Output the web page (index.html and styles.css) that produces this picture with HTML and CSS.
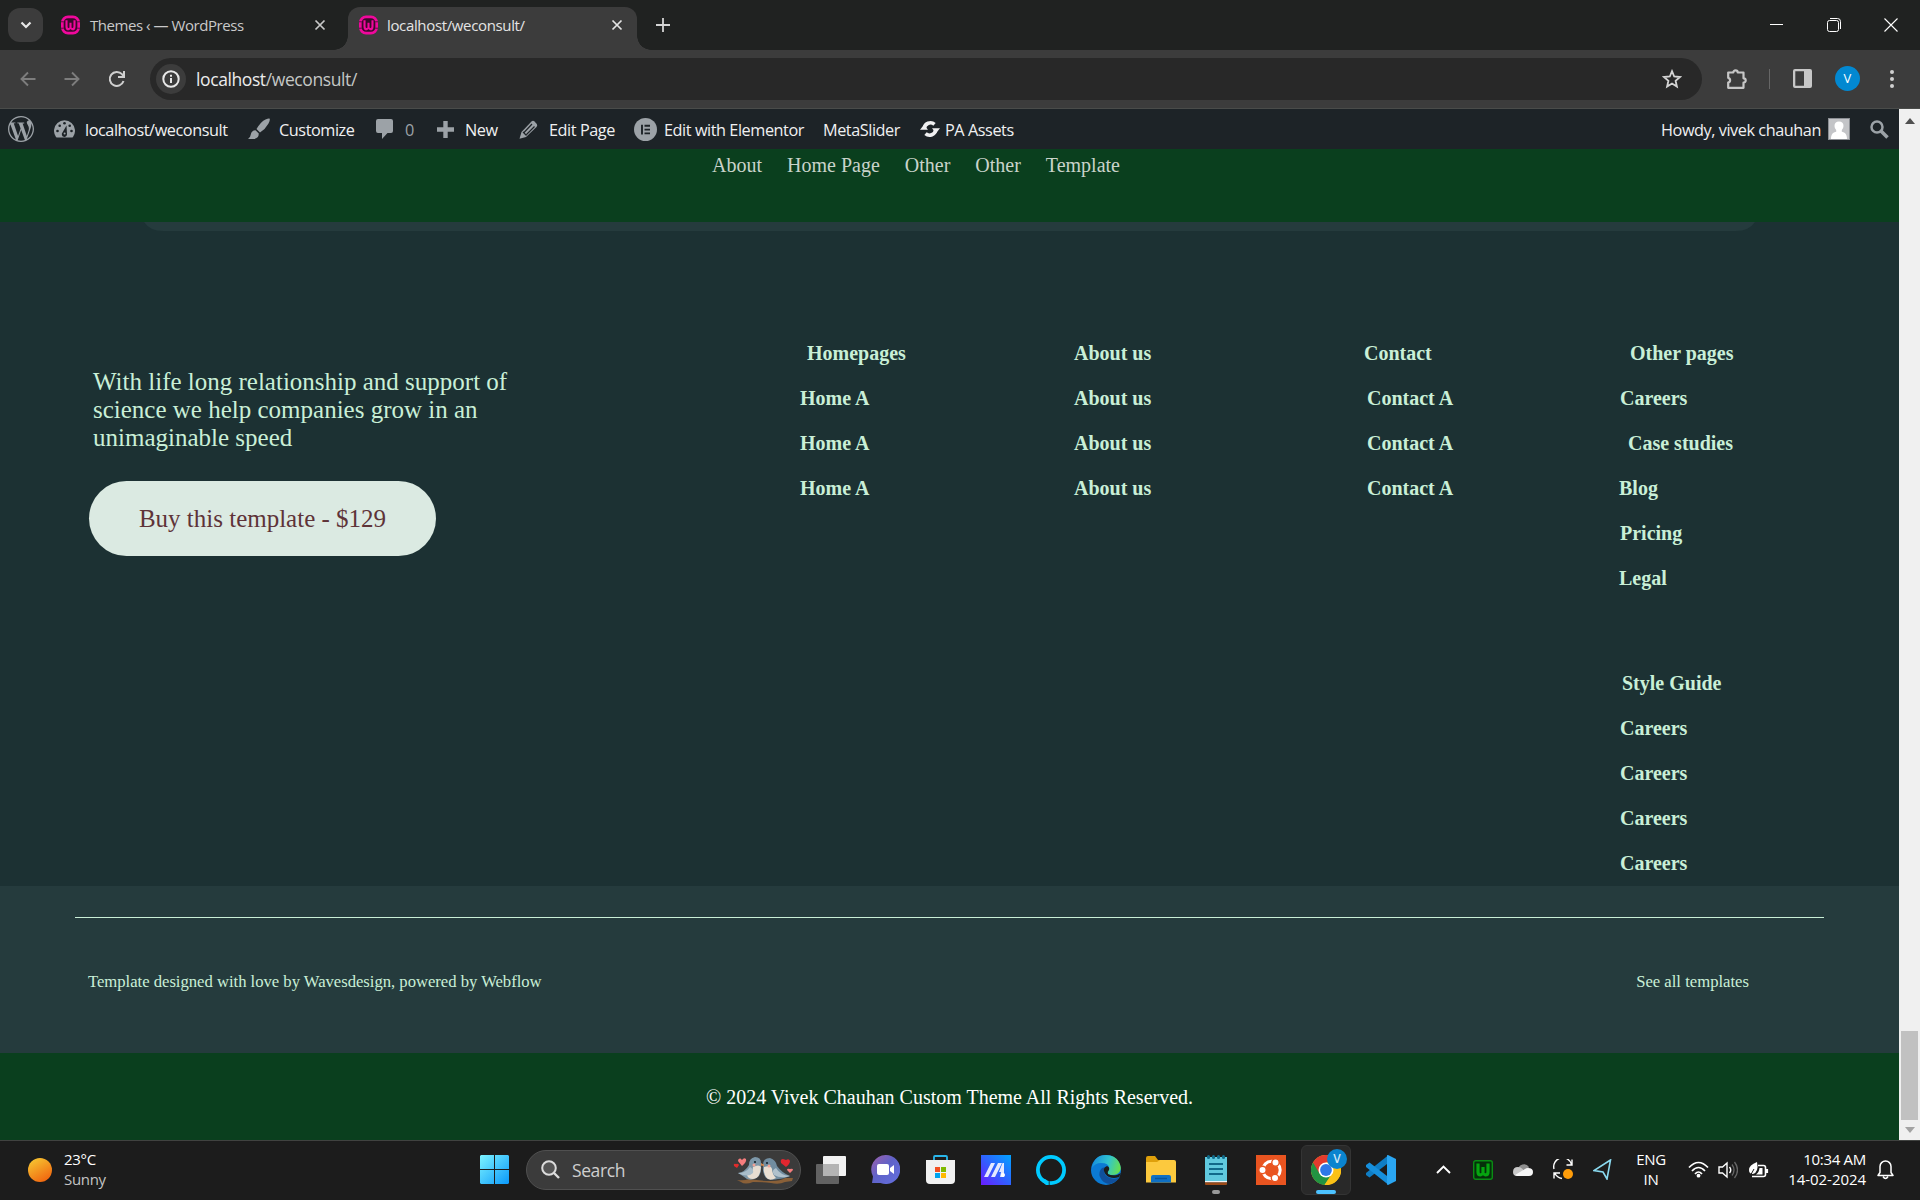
FILE: index.html
```html
<!DOCTYPE html>
<html lang="en">
<head>
<meta charset="utf-8">
<title>localhost/weconsult/</title>
<link rel="stylesheet" href="styles.css">
</head>
<body>
<svg width="0" height="0" class="defs">
  <symbol id="favicon" viewBox="0 0 20 20">
    <rect x="1.4" y="1.4" width="17.2" height="17.2" rx="6" fill="#3a0a2a" stroke="#f0089c" stroke-width="2.8"/>
    <path d="M5.8 5v6.5q0 3 2.200 3l2-1.600 2 1.600q2.200 0 2.200-3V5M10 7.500V13" fill="none" stroke="#f0089c" stroke-width="2.200"/>
    <path d="M0 6.600h3M17 6.600h3M0 13.400h3M17 13.400h3" stroke="#5a1040" stroke-width="1"/>
  </symbol>
  <symbol id="cross" viewBox="0 0 12 12"><path d="M1.500 1.500l9 9M10.500 1.500l-9 9" stroke="currentColor" stroke-width="1.700" fill="none"/></symbol>
</svg>

<header class="tabstrip">
  <div class="tab-search"><svg width="12" height="8" viewBox="0 0 12 8"><path d="M1.500 1.500l4.500 4.500 4.500-4.500" fill="none" stroke="#e8e8e8" stroke-width="2.200"/></svg></div>
  <div class="tab">
    <svg class="fav"><use href="#favicon"/></svg>
    <span class="tab-title t-themes">Themes ‹ — WordPress</span>
    <svg class="close"><use href="#cross"/></svg>
  </div>
  <div class="tab active">
    <svg class="fav"><use href="#favicon"/></svg>
    <span class="tab-title t-local">localhost/weconsult/</span>
    <svg class="close"><use href="#cross"/></svg>
  </div>
  <svg class="plus" width="14" height="14" viewBox="0 0 14 14"><path d="M7 0v14M0 7h14" stroke="#d4d4d4" stroke-width="1.800"/></svg>
  <div class="window-buttons">
    <svg width="14" height="14" viewBox="0 0 14 14"><path d="M0 6.500h13" stroke="#fff"/></svg>
    <svg width="14" height="14" viewBox="0 0 14 14"><path d="M3 .5h7.500q3 0 3 3V11" fill="none" stroke="#fff"/><rect x=".5" y="2.500" width="11" height="11" rx="2" fill="none" stroke="#fff"/></svg>
    <svg width="14" height="14" viewBox="0 0 14 14"><path d="M.5.5l13 13M13.500.5l-13 13" stroke="#fff" stroke-width="1.100"/></svg>
  </div>
</header>

<nav class="toolbar">
  <svg width="16" height="16" viewBox="0 0 16 16"><path d="M15.500 8H2M8 1.500L1.500 8 8 14.500" fill="none" stroke="#7d7d7d" stroke-width="1.900"/></svg>
  <svg width="16" height="16" viewBox="0 0 16 16"><path d="M.5 8H14M8 1.500L14.500 8 8 14.500" fill="none" stroke="#7d7d7d" stroke-width="1.900"/></svg>
  <svg width="18" height="18" viewBox="0 0 18 18"><path d="M15.500 11A7 7 0 1 1 14 4.200l2 2" fill="none" stroke="#d0d0d0" stroke-width="2"/><path d="M16 1v6h-6" fill="none" stroke="#d0d0d0" stroke-width="2"/></svg>
  <div class="omnibox">
    <span class="site-info"><svg width="18" height="18" viewBox="0 0 18 18"><circle cx="9" cy="9" r="7.700" fill="none" stroke="#e8e8e8" stroke-width="2"/><path d="M9 8v5M9 4.800v2" stroke="#e8e8e8" stroke-width="2"/></svg></span>
    <span class="url">localhost<span class="path">/weconsult/</span></span>
    <svg class="star" width="20" height="20" viewBox="0 0 20 20"><path d="M10 2.200l2.200 5.300 5.800.5-4.400 3.800 1.300 5.700-4.900-3-4.900 3 1.300-5.700L2 8l5.800-.5z" fill="none" stroke="#d4d4d4" stroke-width="1.800"/></svg>
  </div>
  <svg width="22" height="22" viewBox="0 0 22 22"><path d="M2.200 4.500h5.100a2.200 2.200 0 0 1 4.400 0h5.800v5.800a2.200 2.200 0 0 1 0 4.400v5.100H2.200v-5.300a2.400 2.400 0 0 0 0-4.700z" fill="none" stroke="#c7c7c7" stroke-width="2.200" stroke-linejoin="round"/></svg>
  <i class="divider"></i>
  <svg width="19" height="19" viewBox="0 0 19 19"><path fill-rule="evenodd" d="M2 0h15a2 2 0 0 1 2 2v15a2 2 0 0 1-2 2H2a2 2 0 0 1-2-2V2A2 2 0 0 1 2 0zM2.300 2.300v14.400h8.700V2.300z" fill="#c7c7c7"/></svg>
  <span class="profile">V</span>
  <svg class="dots" width="4" height="18" viewBox="0 0 4 18"><g fill="#d0d0d0"><circle cx="2" cy="2" r="2"/><circle cx="2" cy="9" r="2"/><circle cx="2" cy="16" r="2"/></g></svg>
</nav>

<div class="viewport">
<div class="page">
  <div class="adminbar">
    <svg width="26" height="26" viewBox="0 0 24 24"><path fill="#9ca2a7" d="M21.469 6.825c.84 1.537 1.318 3.300 1.318 5.175 0 3.979-2.156 7.456-5.363 9.325l3.295-9.527c.615-1.540.820-2.771.820-3.864 0-.405-.026-.780-.070-1.110m-7.981.105c.647-.030 1.232-.105 1.232-.105.582-.075.514-.930-.067-.899 0 0-1.755.135-2.880.135-1.064 0-2.850-.150-2.850-.150-.585-.030-.661.855-.075.885 0 0 .540.061 1.125.090l1.680 4.605-2.370 7.080L5.354 6.900c.649-.030 1.234-.100 1.234-.100.585-.075.516-.930-.065-.896 0 0-1.746.138-2.874.138-.200 0-.438-.008-.690-.015C4.911 3.150 8.235 1.215 12 1.215c2.809 0 5.365 1.072 7.286 2.833-.046-.003-.091-.009-.141-.009-1.060 0-1.812.923-1.812 1.914 0 .890.513 1.643 1.060 2.531.411.720.890 1.643.890 2.977 0 .915-.354 1.994-.821 3.479l-1.075 3.585-3.900-11.610.001.014zM12 22.784c-1.059 0-2.081-.153-3.048-.437l3.237-9.406 3.315 9.087c.024.053.050.101.078.149-1.120.393-2.325.609-3.582.609M1.211 12c0-1.564.336-3.050.935-4.390L7.290 21.709C3.694 19.960 1.212 16.271 1.211 12M12 0C5.385 0 0 5.385 0 12s5.385 12 12 12 12-5.385 12-12S18.615 0 12 0"/></svg>
    <svg width="21" height="21" viewBox="0 0 21 21"><path d="M2 19.500a10.500 10.500 0 1 1 17 0q-.5.500-1.500.500h-14q-1 0-1.500-.500z" transform="translate(0 -1.500)" fill="#9ca2a7"/><g fill="#1d2327"><circle cx="3.500" cy="12" r="1.300"/><circle cx="5.700" cy="6.700" r="1.300"/><circle cx="10.500" cy="4.300" r="1.300"/><circle cx="17.500" cy="12" r="1.300"/><circle cx="15.700" cy="6.700" r="1.300"/><path d="M12.500 6.500l.5 8.500a2.600 2.600 0 1 1-4.500-1.500z"/></g><circle cx="10.600" cy="14.600" r="1" fill="#9ca2a7"/></svg>
    <span class="a1">localhost/weconsult</span>
    <svg width="22" height="22" viewBox="0 0 22 22"><path d="M21.500.5q1 1-1 5-3 5.500-8.500 9l-3.500-3.500Q13 3.500 17.500 1.500q3-1.500 4-1zM7.500 12.200l3.300 3.300q0 5-5.300 5.500-3 .3-5.500-.3 2.500-1 2.700-4 .8-4.500 4.800-4.500z" fill="#9ca2a7"/></svg>
    <span class="a2">Customize</span>
    <svg width="18" height="22" viewBox="0 0 18 22"><path d="M2 1h13q2 0 2 2v10q0 2-2 2h-3.500L6 21v-6H2q-2 0-2-2V3q0-2 2-2z" fill="#9ca2a7"/></svg>
    <span class="dim">0</span>
    <svg width="17" height="17" viewBox="0 0 17 17"><path d="M8.500 0v17M0 8.500h17" stroke="#9ca2a7" stroke-width="4.400"/></svg>
    <span class="a3">New</span>
    <svg width="19" height="19" viewBox="0 0 19 19"><path d="M12.500 1.500q1.500-1.500 3 0L17.800 4q1 1.500-.3 3L7 17l-6.500 1.800L2.500 12z" fill="#9ca2a7"/><path d="M5 12.500l8-8.500M7.500 14.500l8-8M4 12l3.500 3.500" stroke="#1d2327" stroke-width="1.200"/></svg>
    <span class="a4">Edit Page</span>
    <svg width="23" height="23" viewBox="0 0 23 23"><circle cx="11.500" cy="11.500" r="11.500" fill="#9ca2a7"/><path d="M8 6.800v9.600M10.500 7.800H16M10.500 11.600H16M10.500 15.400H16" stroke="#1d2327" stroke-width="1.900"/></svg>
    <span class="a5">Edit with Elementor</span>
    <span class="a6">MetaSlider</span>
    <svg width="20" height="18" viewBox="0 0 20 18"><path d="M4.300 8.500A6.200 6.200 0 0 1 14.500 4.300M15.700 9.500A6.200 6.200 0 0 1 5.500 13.700" fill="none" stroke="#f0f0f1" stroke-width="3.600"/><path d="M12 8.300h8l-4 5zM8 9.700H0l4-5z" fill="#f0f0f1"/></svg>
    <span class="a7">PA Assets</span>
    <span class="a8">Howdy, vivek chauhan</span>
    <svg width="22" height="22" viewBox="0 0 22 22"><rect x=".5" y=".5" width="21" height="21" fill="#c3c4c7" stroke="#8c8f94"/><path d="M3 21c0-5 2-6.500 5.200-7.300V12Q6.500 10.500 6.500 8q0-4.500 4.500-4.500T15.500 8q0 2.500-1.700 4v1.700C17 14.500 19 16 19 21z" fill="#fff"/></svg>
    <svg width="19" height="19" viewBox="0 0 19 19"><circle cx="7" cy="7" r="5.500" fill="none" stroke="#9ca2a7" stroke-width="2.500"/><path d="M11 11l6.500 6.500" stroke="#9ca2a7" stroke-width="3.600"/></svg>
  </div>

  <div class="site-header">
    <a>About</a><a>Home Page</a><a>Other</a><a>Other</a><a>Template</a>
  </div>

  <main class="content">
    <div class="card-edge"></div>
    <div class="footer-columns">
      <section class="intro">
        <p>With life long relationship and support of<br>science we help companies grow in an<br>unimaginable speed</p>
        <a class="buy">Buy this template - $129</a>
      </section>
      <ul>
        <li class="in7">Homepages</li><li>Home A</li><li>Home A</li><li>Home A</li>
      </ul>
      <ul>
        <li>About us</li><li>About us</li><li>About us</li><li>About us</li>
      </ul>
      <ul>
        <li>Contact</li><li class="in3">Contact A</li><li class="in3">Contact A</li><li class="in3">Contact A</li>
      </ul>
      <ul>
        <li class="in11">Other pages</li><li class="in1">Careers</li><li class="in9">Case studies</li><li>Blog</li><li class="in1">Pricing</li><li>Legal</li>
        <li class="in3 group">Style Guide</li><li class="in1">Careers</li><li class="in1">Careers</li><li class="in1">Careers</li><li class="in1">Careers</li>
      </ul>
    </div>
  </main>

  <div class="credits">
    <div class="rule"></div>
    <div class="credit-row"><span class="designed">Template designed with love by Wavesdesign, powered by Webflow</span><span>See all templates</span></div>
  </div>
  <footer class="copyright">© 2024 Vivek Chauhan Custom Theme All Rights Reserved.</footer>
</div>
<div class="scrollbar">
  <svg width="10" height="6" viewBox="0 0 10 6"><path d="M0 6l5-6 5 6z" fill="#505050"/></svg>
  <div class="thumb"></div>
  <svg width="10" height="6" viewBox="0 0 10 6"><path d="M0 0l5 6 5-6z" fill="#a3a3a3"/></svg>
</div>
</div>

<div class="taskbar">
  <i class="sun"></i>
  <div class="weather"><span>23°C</span><span class="soft">Sunny</span></div>
  <svg width="29" height="29" viewBox="0 0 29 29"><defs><linearGradient id="win" x1="0" y1="0" x2="1" y2="1"><stop offset="0" stop-color="#7df4ff"/><stop offset="1" stop-color="#0a98fa"/></linearGradient></defs><path d="M1 0h13v14H0V1zM15 0h13l1 1v13H15zM0 15h14v14H1l-1-1zM15 15h14v13l-1 1H15z" fill="url(#win)"/></svg>
  <div class="search">
    <svg width="19" height="19" viewBox="0 0 19 19"><circle cx="8" cy="8" r="6.800" fill="#555" stroke="#dcdcdc" stroke-width="2"/><path d="M13 13l5 5" stroke="#dcdcdc" stroke-width="2.400"/></svg>
    <span>Search</span>
    <svg class="birds" width="62" height="30" viewBox="0 0 62 30">
      <path d="M4 25q7 1 12-1 12 2 22 2 10 0 14-3l8 0-1 3-7 1q-6 3-14 1-9-1-18-1-8 3-12 0z" fill="#8a6038"/>
      <path d="M5 18q7-1 11-8 0-7 6-8 6 0 6 6 1 10-3 14-5 4-11 2Q10 21 5 18z" fill="#7d97a8"/>
      <path d="M20 12q6-3 8 0-1 12-8 12-5 0-6-4 6-2 6-8z" fill="#e6ddd2"/>
      <path d="M5 18q8 0 12-6 4 2 3 6-5 5-15 0z" fill="#a9bdca"/>
      <path d="M57 21q-8-3-13-10-1-6-7-8-7 0-7 7-1 8 3 13 5 3 12 1 5 0 12-3z" fill="#718da0"/>
      <path d="M31 12q7-2 8 2 0 5 4 9-7 4-10-1-3-5-2-10z" fill="#eadfd2"/>
      <path d="M57 21q-10-1-14-8-5 2-2 7 7 4 16 1z" fill="#b0c1cc"/>
      <circle cx="22" cy="7" r="1.100" fill="#16242e"/><circle cx="34" cy="8" r="1.100" fill="#16242e"/><circle cx="21" cy="10" r="1.500" fill="#f3a295"/><circle cx="36" cy="11" r="1.500" fill="#f3a295"/>
      <path d="M28 8l2.500 1.500L28 11zM31 9l-2 1.500 2 1z" fill="#d68a50"/>
      <path d="M9 11L5 6q0-3 2.500-2.500L9 5q2-3 4-1 1 3-4 7z" fill="#f57d7d"/><path d="M4 13L1 11q-1-3 2-2 2-1 3 1z" fill="#e02b2b"/>
      <path d="M53 12l-5-4q-1-4 2-4l3 1q3-2 4 1 0 3-4 6z" fill="#e3262f"/><path d="M57 18l-3-3q0-2 3-1 3-1 3 1z" fill="#f57d7d"/>
    </svg>
  </div>
  <svg width="30" height="28" viewBox="0 0 30 28"><rect y="8" width="23" height="20" rx="1" fill="#626262"/><rect x="7" width="23" height="20" rx="1" fill="#f2f2f2"/><rect x="7" y="8" width="16" height="12" fill="#b4b4b4"/></svg>
  <svg width="29" height="29" viewBox="0 0 29 29"><defs><linearGradient id="chat" x1="0" y1="0" x2="1" y2="1"><stop offset="0" stop-color="#a05fa8"/><stop offset=".45" stop-color="#5f62c8"/><stop offset="1" stop-color="#6470e0"/></linearGradient></defs><path d="M14.500 0a14.500 14.500 0 1 1-5 28L1 28l1-6.500A14.500 14.500 0 0 1 14.500 0z" fill="url(#chat)"/><rect x="6" y="9" width="12" height="11" rx="2" fill="#fff"/><path d="M19 13l4-3v9l-4-3z" fill="#fff"/></svg>
  <svg width="29" height="30" viewBox="0 0 29 30"><path d="M8 6V2q0-1 1-1h11q1 0 1 1v4" fill="none" stroke="#29b6ea" stroke-width="1.800"/><path d="M0 5h29v20q0 4-4 4H4q-4 0-4-4z" fill="#f1f1f1"/><path d="M9 12h5v5H9z" fill="#f25022"/><path d="M15 12h5v5h-5z" fill="#7fba00"/><path d="M9 18h5v5H9z" fill="#00a4ef"/><path d="M15 18h5v5h-5z" fill="#ffb900"/></svg>
  <svg width="30" height="30" viewBox="0 0 30 30"><defs><linearGradient id="asus" x1="0" y1="1" x2="1" y2="0"><stop offset="0" stop-color="#6a1bff"/><stop offset=".5" stop-color="#2f62ff"/><stop offset="1" stop-color="#00a4ff"/></linearGradient></defs><path d="M0 0h30v30H0z" fill="url(#asus)"/><path d="M3 22L10 8h4L7 22zM10 22l7-14h4l-7 14zM18 17l3.500-9H23v14h-4l1-5z" fill="#e4e9ff"/><circle cx="22" cy="20" r="2" fill="#fff"/></svg>
  <svg width="30" height="30" viewBox="0 0 30 30"><circle cx="15" cy="15" r="13.100" fill="none" stroke="#00caff" stroke-width="3.800"/><path d="M7.500 23.500q4.500 1 6.500 6.500h-4l-6-5z" fill="#00caff"/><path d="M13.200 26v4" stroke="#1c1c1c" stroke-width="0.800"/></svg>
  <svg width="30" height="30" viewBox="0 0 30 30"><defs><linearGradient id="edge" x1="0" y1=".3" x2="1" y2=".5"><stop offset="0" stop-color="#168ddd"/><stop offset=".55" stop-color="#31c4cf"/><stop offset="1" stop-color="#66df50"/></linearGradient></defs><circle cx="15" cy="15" r="15" fill="#0b7ad4"/><path d="M15 0q9 0 13 7 3 6 1 9-2 4-8 4-5 0-5-3l2-4q0-5-8-5Q4 8 1 13 3 0 15 0z" fill="url(#edge)"/><path d="M11 13q-4 4-2 9 3 7 10 7 7-2 10-7-5 3-10 1-6-2-6-7 0-2 2-4z" fill="#10509c"/><path d="M13 16q-1-3 3-5 3 1 2 4-2 2-1 4 3 2 9 1l4-2-2 4q-5 2-10 0-4-2-5-6z" fill="#1c1c1c"/></svg>
  <svg width="30" height="27" viewBox="0 0 30 27"><path d="M0 2q0-2 2-2h7l3 4h9v7H0z" fill="#dfa00b"/><path d="M0 6h11l3-2h14q2 0 2 2v20.500H0z" fill="#fcc93e"/><path d="M5 26.500V21q0-2 2-2h16q2 0 2 2v5.500z" fill="#0f70c4"/><path d="M9 22.500h12" stroke="#07549c" stroke-width="1.500"/></svg>
  <div class="app running"><svg width="22" height="30" viewBox="0 0 22 30"><path d="M0 2h22v25H0z" fill="#60c9de"/><path d="M0 26h22v1.500H0z" fill="#f4f4f4"/><path d="M0 27.500h22V29q0 1-1 1H1q-1 0-1-1z" fill="#9c4a17"/><g fill="#126d8c"><rect x="2" width="3" height="4" rx="1.500"/><rect x="7" width="3" height="4" rx="1.500"/><rect x="12" width="3" height="4" rx="1.500"/><rect x="17" width="3" height="4" rx="1.500"/></g><path d="M4 9h14M4 14h14M4 19h14" stroke="#11698a" stroke-width="1.800"/></svg></div>
  <svg width="30" height="30" viewBox="0 0 30 30"><path d="M0 0h30v30H0z" fill="#e95420"/><circle cx="15.500" cy="15" r="8.700" fill="none" stroke="#fff" stroke-width="3"/><g fill="#fff" stroke="#e95420" stroke-width="1.400"><circle cx="6.500" cy="15" r="3.700"/><circle cx="19.500" cy="7.500" r="3.700"/><circle cx="19" cy="23" r="3.700"/></g></svg>
  <div class="app focused"><svg width="30" height="30" viewBox="0 0 30 30"><circle cx="15" cy="15" r="15" fill="#fbc116"/><path d="M15 15L2 7.500A15 15 0 0 0 13.500 30L21 18.500z" fill="#229342"/><path d="M2 7.500A15 15 0 0 1 28 7.500H15l-6.500 11z" fill="#e33b2e"/><path d="M15 7.500h13A15 15 0 0 1 13.500 30L21.500 18.500z" fill="#fbc116"/><circle cx="15" cy="15" r="7.500" fill="#fff"/><circle cx="15" cy="15" r="5.900" fill="#2e78e8"/></svg><b>V</b></div>
  <svg width="30" height="30" viewBox="0 0 30 30"><path d="M21 9L3.500 22.500 0 20q-.5-1 0-2L22 .5z" fill="#0f7dc4"/><path d="M21 21L3.500 7.500 0 10q-.5 1 0 2l22 17.500z" fill="#168fdc"/><path d="M21 .3l1-.3 8 4v22l-8 4-1-.5z" fill="#2aa6f2"/></svg>
  <svg width="15" height="9" viewBox="0 0 15 9"><path d="M1 8l6.500-6.500L14 8" fill="none" stroke="#fff" stroke-width="1.900"/></svg>
  <svg width="20" height="20" viewBox="0 0 20 20"><rect x=".7" y=".7" width="18.600" height="18.600" rx="2" fill="#05300a" stroke="#0a8c14" stroke-width="1.400"/><path d="M5 3.500V12q0 3 2.500 3l2.500-1.500 2.500 1.500Q15 15 15 12V3.500M10 7v6.500" fill="none" stroke="#06a510" stroke-width="3.200"/></svg>
  <svg width="20" height="14" viewBox="0 0 20 14"><path d="M5 7a6 6 0 0 1 11-3l-2 4z" fill="#8f8f8f"/><path d="M0 9q0-5 5-5 3 0 4.500 2L15 13H4q-4 0-4-4z" fill="#c8c8c8"/><path d="M2 12l10-6q1-1 3-1 5 0 5 4t-4 4H4z" fill="#f5f5f5"/></svg>
  <svg width="21" height="21" viewBox="0 0 21 21"><path d="M1 10A9 9 0 0 1 18.500 5.500M19 .5v5.500h-5.500M9 19.500q-5-1-7-5M1 19.500V14h6" fill="none" stroke="#fff" stroke-width="1.400"/><circle cx="15" cy="15" r="5" fill="#ff9d0a"/></svg>
  <svg width="20" height="21" viewBox="0 0 20 21"><path d="M17.500 1L1 11.500l9 1.500 4 7z" fill="none" stroke="#8ad9ef" stroke-width="1.600"/></svg>
  <div class="lang"><span>ENG</span><span>IN</span></div>
  <svg width="21" height="17" viewBox="0 0 21 17"><path d="M1 6.500q9.500-10 19 0M4 10q6.500-7 13 0M7 13q3.500-4 7 0" fill="none" stroke="#fff" stroke-width="1.700"/><circle cx="10.500" cy="14.700" r="1.900" fill="#fff"/></svg>
  <svg width="20" height="20" viewBox="0 0 20 20"><path d="M1 7h3.500L9 3v14l-4.500-4H1z" fill="none" stroke="#fff" stroke-width="1.400"/><path d="M11.500 7q2.500 3 0 6" fill="none" stroke="#fff" stroke-width="1.400"/><path d="M14 4.500q4 5.500 0 11M16.500 2q6 8 0 16" fill="none" stroke="#666" stroke-width="1.300"/></svg>
  <svg width="21" height="18" viewBox="0 0 21 18"><path d="M10 4.500h5.500q2 0 2 2v7q0 2-2 2H4" fill="none" stroke="#fff" stroke-width="1.600"/><path d="M19 8v4" stroke="#fff" stroke-width="2.200"/><path d="M11.500 7h3v6.500H8q3-2 3.500-6.500z" fill="#fff"/><path d="M1 9q0-5 8-8 2 10-4 12-4 0-4-4z" fill="#fff"/><path d="M1 17l5-9" stroke="#1c1c1c"/></svg>
  <div class="clock"><span>10:34 AM</span><span class="date">14-02-2024</span></div>
  <svg width="17" height="21" viewBox="0 0 17 21"><path d="M1 16.500l2-3V7.500a5.500 5.500 0 0 1 11 0v6l2 3z" fill="none" stroke="#fff" stroke-width="1.500" stroke-linejoin="round"/><path d="M6 17.500q2.500 4 5 0" fill="none" stroke="#fff" stroke-width="1.500"/></svg>
</div>
</body>
</html>
```
FILE: styles.css
```css
* { box-sizing: border-box; }
body {
  margin: 0;
  width: 1920px;
  height: 1200px;
  overflow: hidden;
  display: flex;
  flex-direction: column;
  background: #1c1c1c;
  font-family: "Open Sans", "Noto Sans", sans-serif;
}
svg { display: block; flex: none; }
.defs { position: absolute; }
span, a { white-space: nowrap; }

/* Browser tab strip */
.tabstrip { height: 50px; flex: none; background: #202221; display: flex; align-items: center; padding-left: 8px; }
.tab-search { width: 35px; height: 34px; border-radius: 12px; background: #3c3c3c; display: flex; align-items: center; justify-content: center; }
.tab { width: 289px; display: flex; align-items: center; padding-left: 12px; color: #c9c9c9; margin-left: 6px; }
.tab .close { margin-right: 12px; }
.tab.active { position: relative; height: 43px; margin: 7px 0 0 10px; padding: 0 0 7px 11px; background: #3c3c3c; border-radius: 12px 12px 0 0; color: #e4e4e4; }
.tab.active::before, .tab.active::after { content: ""; position: absolute; bottom: 0; width: 14px; height: 14px; }
.tab.active::before { left: -14px; background: radial-gradient(circle at 0 0, #202221 13.5px, #3c3c3c 14px); }
.tab.active::after { right: -14px; background: radial-gradient(circle at 100% 0, #202221 13.5px, #3c3c3c 14px); }
.fav { width: 19px; height: 20px; }
.tab-title { font-size: 15px; margin-left: 10px; flex: 1; }
.active .tab-title { margin-left: 9px; }
.t-themes { letter-spacing: -.45px; }
.t-local { letter-spacing: -.35px; }
.close { width: 12px; height: 12px; }
.tab.active .close { margin-right: 14px; }
.plus { margin-left: 19px; }
.window-buttons { margin-left: auto; padding-right: 22px; display: flex; gap: 43px; }

/* Browser toolbar */
.toolbar { height: 59px; flex: none; display: flex; align-items: center; padding: 0 0 1px 20px; background: #3c3c3c; border-bottom: 1px solid #4a4c4a; }
.toolbar > svg + svg { margin-left: 28px; }
.omnibox { width: 1552px; height: 42px; border-radius: 21px; margin-left: 24px; background: #282828; display: flex; align-items: center; padding-left: 6px; margin-right: 24px; }
.site-info { width: 30px; height: 30px; border-radius: 50%; background: #3c3c3c; display: flex; align-items: center; justify-content: center; }
.url { font-size: 17.5px; margin-left: 10px; flex: 1; color: #ececec; letter-spacing: -.4px; }
.path { color: #c4c7c5; }
.star { margin-right: 20px; }
.divider { width: 1px; height: 20px; background: #666; margin: 0 23px 0 21px; }
.profile { width: 25px; height: 25px; border-radius: 50%; background: #0288d1; color: #fff; font-size: 13px; line-height: 25px; text-align: center; margin-left: 23px; }
.dots { margin-left: 30px; }

/* Page viewport */
.viewport { display: flex; height: 1031px; flex: none; }
.page { width: 1899px; display: flex; flex-direction: column; font-family: "Liberation Serif", "Times New Roman", serif; }
.scrollbar { width: 21px; background: #f0f0f0; display: flex; flex-direction: column; align-items: center; padding: 9px 0 7px; }
.thumb { width: 17px; height: 89px; background: #c1c1c1; margin: auto 0 7px; }

/* Admin bar */
.adminbar {
  height: 40px; flex: none; background: #1d2327; color: #f0f0f1; padding-left: 8px;
  display: grid; align-items: center;
  grid-template-columns: 46px 31px 163px 31px 97px 29px 32px 28px 54px 30px 85px 30px 159px 97px 25px 716px 167px 42px 21px;
  font: 16.25px/24px "Open Sans", "Noto Sans", sans-serif;
}
.adminbar span { padding-top: 2px; letter-spacing: -.44px; }
.adminbar .dim { color: #9ca2a7; }

/* Theme header */
.site-header { height: 73px; flex: none; background: #0a3f1e; padding: 5px 0 0 712px; display: flex; gap: 25px; font-size: 20px; line-height: 23px; color: #c9d3ca; }

/* Main area */
.content { height: 664px; flex: none; background: #1c3133; }
.card-edge { height: 9px; margin: 0 138px; background: #253b3d; clip-path: path("M6 0H1617Q1611 9 1598 9H25Q12 9 6 0Z"); }
.footer-columns { display: grid; grid-template-columns: 711px 274px 290px 255px 200px; padding: 100px 0 0 89px; }
.intro { padding-top: 37px; }
.intro p { margin: 0 0 29px 4px; font-size: 25px; line-height: 28px; color: #c9efd7; }
.buy { display: flex; align-items: center; justify-content: center; width: 347px; height: 75px; border-radius: 38px; background: #dbeae2; color: #5e3338; font-size: 25px; }
.footer-columns ul { list-style: none; margin: 0; padding: 0; font-size: 20px; font-weight: bold; line-height: 45px; color: #c9efd7; }
.in1 { padding-left: 1px; }
.in3 { padding-left: 3px; }
.in7 { padding-left: 7px; }
.in9 { padding-left: 9px; }
.in11 { padding-left: 11px; }
.group { margin-top: 60px; }

.credits { height: 167px; flex: none; background: #253b3d; padding-top: 31px; }
.rule { height: 1px; background: #c9efd7; margin: 0 75px; }
.credit-row { display: flex; justify-content: space-between; padding: 53px 150px 0 88px; font-size: 16.67px; line-height: 22px; color: #c9efd7; }
.designed { letter-spacing: -.02px; }
.copyright { flex: 1; background: #0a3f1e; color: #fff; font-size: 20px; line-height: 23px; text-align: center; padding-top: 33px; }

/* Taskbar */
.taskbar {
  flex: 1; background: #1c1c1c; border-top: 1px solid #404240; padding: 0 0 2px 28px; color: #fff; font-size: 15px; line-height: 20px;
  display: grid; align-items: center;
  grid-template-columns: 36px 416px 46px 290px 55px 55px 55px 55px 55px 55px 55px 55px 45px 65px 70px 37px 40px 40px 40px 37px 58px 30px 30px 30px 99px 17px;
}
.sun { width: 24px; height: 24px; border-radius: 50%; background: linear-gradient(150deg, #f6bd2e 15%, #f0640f 90%); }
.weather, .lang, .clock { display: flex; flex-direction: column; letter-spacing: -.3px; padding-bottom: 1px; }
.soft { color: #c4c4c4; }
.lang { width: 42px; align-items: center; }
.clock { width: 88px; align-items: flex-end; }
.date { letter-spacing: -.05px; }
.search { width: 275px; height: 40px; border-radius: 20px; background: #3b3b3b; border: 1px solid #505050; display: flex; align-items: center; padding-left: 14px; font-size: 17.5px; color: #cfcfcf; }
.search span { margin-left: 12px; flex: 1; letter-spacing: -.4px; }
.birds { margin-right: 5px; }
.app { position: relative; display: flex; }
.running { margin-left: 4px; }
.running::after { content: ""; position: absolute; left: 7px; top: 35px; width: 8px; height: 4px; border-radius: 2px; background: #999; }
.focused { width: 50px; height: 50px; padding: 9px; border: 1px solid #343434; border-radius: 6px; background: #292929; }
.focused::after { content: ""; position: absolute; left: 14px; bottom: 0; width: 20px; height: 4px; border-radius: 2px; background: #4cc2ff; }
.focused b { position: absolute; left: 25px; top: 3px; width: 20px; height: 20px; border-radius: 50%; background: #0a84cf; font: 600 12px/20px "Open Sans", sans-serif; text-align: center; color: #cfe6f5; }
```
